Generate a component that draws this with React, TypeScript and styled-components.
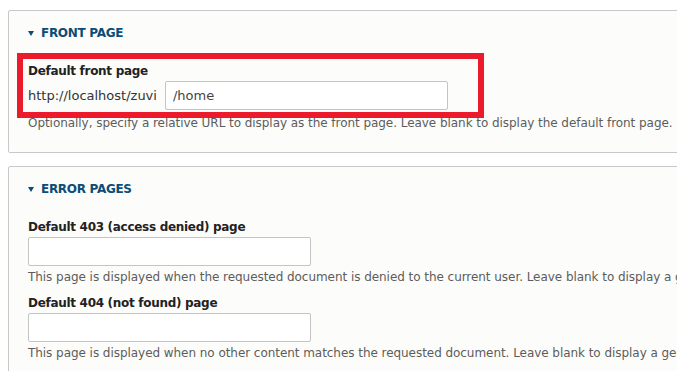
import { createGlobalStyle, styled } from 'styled-components'

const GlobalStyle = createGlobalStyle`
  html, body {
    margin: 0;
    padding: 0;
    background: #ffffff;
  }
  body {
    font-family: "DejaVu Sans", "Liberation Sans", sans-serif;
    color: #333333;
  }
`

const Page = styled.div`
  width: 677px;
  height: 371px;
  overflow: hidden;
  padding: 10px 0 0 8px;
  box-sizing: border-box;
`

const Panel = styled.section`
  width: 720px;
  box-sizing: border-box;
  border: 1px solid #c8c8c8;
  border-radius: 2px;
  background: #fcfcfa;
  padding: 13px 0 21px 19px;
  margin-bottom: 13px;
`

const Summary = styled.div`
  display: flex;
  align-items: center;
  gap: 7px;
  height: 18px;
  margin-bottom: 20px;
  color: #0c4c76;
  font-size: 12px;
  font-weight: bold;
  letter-spacing: -0.3px;
  text-transform: uppercase;
`

const Caret = styled.span`
  width: 0;
  height: 0;
  border-left: 3px solid transparent;
  border-right: 3px solid transparent;
  border-top: 5px solid #0c4c76;
`

const Field = styled.div<{ $gap?: number }>`
  position: relative;
  margin-bottom: ${(p) => p.$gap ?? 0}px;
`

const Label = styled.div`
  font-size: 12px;
  font-weight: bold;
  letter-spacing: -0.3px;
  line-height: 18px;
  color: #222222;
  margin-bottom: 1px;
`

const Row = styled.div`
  display: flex;
  align-items: center;
  gap: 8px;
  padding-bottom: 2px;
`

const Prefix = styled.span`
  font-size: 13px;
  color: #333333;
`

const TextInput = styled.input`
  box-sizing: border-box;
  width: 283px;
  height: 29px;
  margin: 0;
  padding: 0 7px;
  border: 1px solid #c4c4c4;
  border-radius: 2px;
  background: #ffffff;
  font-family: "DejaVu Sans", sans-serif;
  font-size: 13px;
  color: #444444;
  outline: none;
`

const Description = styled.div`
  margin-top: 3px;
  font-size: 12px;
  line-height: 16px;
  letter-spacing: -0.05px;
  color: #5c5c5c;
  white-space: nowrap;
`

const Highlight = styled.div`
  position: absolute;
  left: -11px;
  top: -9px;
  width: 467px;
  height: 65px;
  box-sizing: border-box;
  border: 6px solid #ec1b2c;
  pointer-events: none;
`

export default function App() {
  return (
    <>
      <GlobalStyle />
      <Page>
        <Panel>
          <Summary>
            <Caret />
            Front page
          </Summary>
          <Field>
            <Label>Default front page</Label>
            <Row>
              <Prefix>http://localhost/zuvi</Prefix>
              <TextInput defaultValue="/home" />
            </Row>
            <Description>
              Optionally, specify a relative URL to display as the front page. Leave blank to display the default front page.
            </Description>
            <Highlight />
          </Field>
        </Panel>
        <Panel>
          <Summary>
            <Caret />
            Error pages
          </Summary>
          <Field $gap={9}>
            <Label>Default 403 (access denied) page</Label>
            <TextInput />
            <Description>
              This page is displayed when the requested document is denied to the current user. Leave blank to display a generic "access denied" page.
            </Description>
          </Field>
          <Field>
            <Label>Default 404 (not found) page</Label>
            <TextInput />
            <Description>
              This page is displayed when no other content matches the requested document. Leave blank to display a generic "page not found" page.
            </Description>
          </Field>
        </Panel>
      </Page>
    </>
  )
}
